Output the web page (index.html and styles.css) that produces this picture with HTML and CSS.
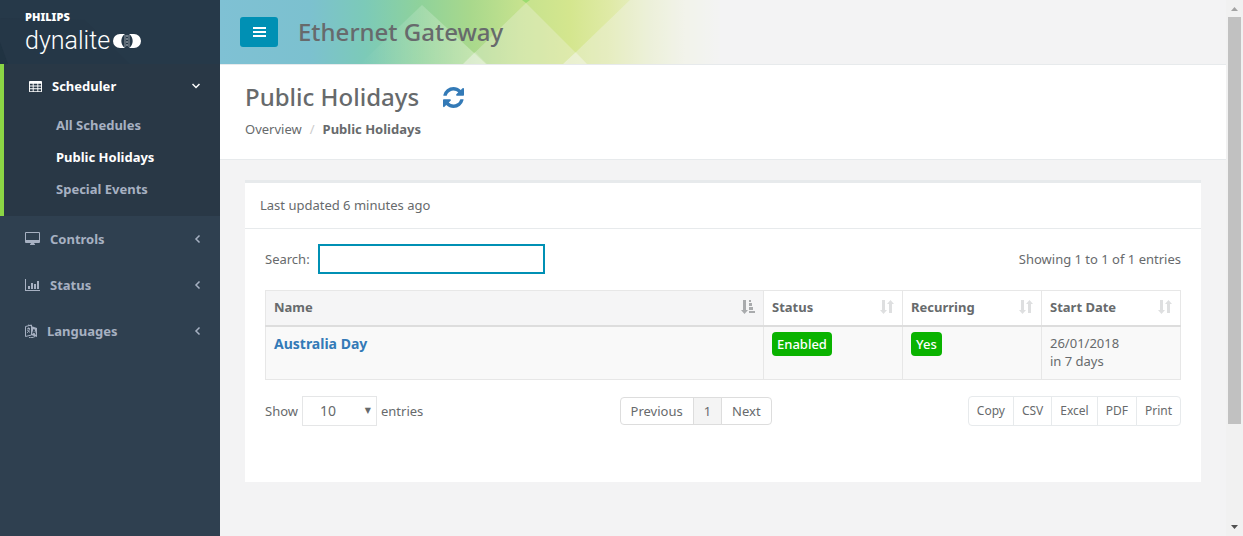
FILE: index.html
```html
<!DOCTYPE html>
<html lang="en">
<head>
    <meta charset="UTF-8">
    <meta name="viewport" content="width=device-width, initial-scale=1.0">
    <title>Ethernet Gateway - Public Holidays</title>
    <link rel="stylesheet" href="styles.css">
</head>
<body>
    <nav class="sidebar">
        <div class="brand">
            <svg class="brand-pattern" viewBox="0 0 220 64" preserveAspectRatio="none" aria-hidden="true">
                <path d="M0 0H220V64H130L85 20 0 18z" fill="#283b4b" opacity=".5"/>
                <path d="M0 42l8 22H0z" fill="#203342"/>
            </svg>
            <span class="brand-name">PHILIPS</span>
            <span class="brand-product">dynalite
                <svg class="brand-mark" viewBox="0 0 28 14" aria-hidden="true">
                    <path d="M7 0h5a8.500 8.500 0 0 0 0 14H7A7 7 0 0 1 7 0zM21 0h-5a8.500 8.500 0 0 1 0 14h5A7 7 0 0 0 21 0z" fill="#fff"/>
                    <path d="M12 1v12M16 1v12" fill="none" stroke="#fff" stroke-opacity=".5"/>
                    <path d="M14 1v12" stroke="#fff" stroke-dasharray="2 1" stroke-opacity=".7"/>
                </svg>
            </span>
        </div>
        <ul class="menu">
            <li class="menu-group active">
                <a class="menu-link" href="#">
                    <svg class="icon icon-small" viewBox="0 0 14 14" aria-hidden="true"><path fill="currentColor" fill-rule="evenodd" d="M1 1h12a1 1 0 0 1 1 1v10a1 1 0 0 1-1 1H1a1 1 0 0 1-1-1V2a1 1 0 0 1 1-1zM1 4v2h3V4zm4 0v2h4V4zm5 0v2h3V4zM1 7v2h3V7zm4 0v2h4V7zm5 0v2h3V7zM1 10v2h3v-2zm4 0v2h4v-2zm5 0v2h3v-2z"/></svg>
                    <span class="menu-label">Scheduler</span>
                    <svg class="arrow" viewBox="0 0 8 8" aria-hidden="true"><path d="M0.500 2L4 5.500 7.500 2"/></svg>
                </a>
                <ul class="submenu">
                    <li><a href="#">All Schedules</a></li>
                    <li><a class="current" href="#">Public Holidays</a></li>
                    <li><a href="#">Special Events</a></li>
                </ul>
            </li>
            <li class="menu-group">
                <a class="menu-link" href="#">
                    <svg class="icon" viewBox="0 0 15 14" aria-hidden="true"><path fill="currentColor" fill-rule="evenodd" d="M1 0h13a1 1 0 0 1 1 1v9a1 1 0 0 1-1 1H9l1 1.500v.5H5v-.5L6 11H1a1 1 0 0 1-1-1V1a1 1 0 0 1 1-1zm0 1v7h13V1z"/></svg>
                    <span class="menu-label">Controls</span>
                    <svg class="arrow" viewBox="0 0 8 8" aria-hidden="true"><path d="M5.500 0.500L2 4l3.500 3.500"/></svg>
                </a>
            </li>
            <li class="menu-group">
                <a class="menu-link" href="#">
                    <svg class="icon" viewBox="0 0 15 14" aria-hidden="true"><path fill="currentColor" d="M0 1h1v11h14v1H0zM3 8h2v3H3zM6 5h2v6H6zM9 6h2v5H9zM12 3h2v8h-2z"/></svg>
                    <span class="menu-label">Status</span>
                    <svg class="arrow" viewBox="0 0 8 8" aria-hidden="true"><path d="M5.500 0.500L2 4l3.500 3.500"/></svg>
                </a>
            </li>
            <li class="menu-group">
                <a class="menu-link" href="#">
                    <svg class="icon icon-narrow" viewBox="0 0 12 14" aria-hidden="true">
                        <path fill="none" stroke="currentColor" d="M.5 2.500l6-1.500v10l-6 1.500zM2 5l3-.7M3.500 3.500v1.500M4.500 5c-.5 2-1.500 3-2.500 4M2.500 6c.6 1.200 1.500 2 2.500 2.300M3 1l4 1M4 13.500c2 .4 4 .1 6-1"/>
                        <path fill="currentColor" fill-rule="evenodd" d="M6 2l6 2v9l-6-2zM8.500 5L7 9.500l1 .3.3-1 1.500.4.4 1.200 1 .3L9.700 5.400zm.6 1.500l.5 1.500-1-.3z"/>
                    </svg>
                    <span class="menu-label">Languages</span>
                    <svg class="arrow" viewBox="0 0 8 8" aria-hidden="true"><path d="M5.500 0.500L2 4l3.500 3.500"/></svg>
                </a>
            </li>
        </ul>
    </nav>

    <main class="page">
        <header class="topbar">
            <svg class="topbar-art" viewBox="0 0 500 64" aria-hidden="true">
                <defs>
                    <linearGradient id="spectrum">
                        <stop offset="0" stop-color="#7fc1d4"/>
                        <stop offset=".18" stop-color="#7cc1cf"/>
                        <stop offset=".29" stop-color="#7ccab8"/>
                        <stop offset=".4" stop-color="#8fd29b"/>
                        <stop offset=".5" stop-color="#a8d88c"/>
                        <stop offset=".6" stop-color="#c5e28e"/>
                        <stop offset=".7" stop-color="#d4e68e"/>
                        <stop offset=".78" stop-color="#dfeaa6"/>
                        <stop offset=".86" stop-color="#e9efcc"/>
                        <stop offset=".93" stop-color="#f1f3e6"/>
                        <stop offset="1" stop-color="#f3f3f3"/>
                    </linearGradient>
                    <linearGradient id="fade">
                        <stop offset="0" stop-color="#fff" stop-opacity="0"/>
                        <stop offset="1" stop-color="#fff" stop-opacity=".35"/>
                    </linearGradient>
                </defs>
                <path d="M0 0h500v64H0z" fill="url(#spectrum)"/>
                <path d="M202 5l64 59H140z" fill="url(#fade)"/>
                <path d="M306 3l61 61H243z" fill="#f3f3e8" opacity=".32"/>
                <path d="M410 0h90v64H343l13-12z" fill="#f3f3f3" opacity=".35"/>
                <path d="M255 52l12 12h-24zM356 52l11 12h-24z" fill="#fff" opacity=".2"/>
                <path d="M302 0h8l-4 3z" fill="#9bdc70"/>
            </svg>
            <button class="menu-toggle" type="button" aria-label="Toggle menu">
                <svg viewBox="0 0 13 10" aria-hidden="true"><path fill="#fff" d="M0 0h13v2H0zM0 4h13v2H0zM0 8h13v2H0z"/></svg>
            </button>
            <h1>Ethernet Gateway</h1>
        </header>

        <section class="page-heading">
            <div class="title-row">
                <h2>Public Holidays</h2>
                <a class="refresh" href="#" aria-label="Refresh">
                    <svg viewBox="128 128 1536 1536" aria-hidden="true"><path fill="currentColor" d="M1639 1056q0 5-1 7-64 268-268 434.500t-478 166.500q-146 0-282.500-55t-243.500-157l-129 129q-19 19-45 19t-45-19-19-45v-448q0-26 19-45t45-19h448q26 0 45 19t19 45-19 45l-137 137q71 66 161 102t187 36q134 0 250-65t186-179q11-17 53-117 8-23 30-23h192q13 0 22.500 9.500t9.500 22.500zm25-800v448q0 26-19 45t-45 19h-448q-26 0-45-19t-19-45 19-45l138-138q-148-137-349-137-134 0-250 65t-186 179q-11 17-53 117-8 23-30 23h-199q-13 0-22.500-9.500t-9.500-22.500v-7q65-268 270-434.500t480-166.500q146 0 284 55.500t245 156.500l130-129q19-19 45-19t45 19 19 45z"/></svg>
                </a>
            </div>
            <ol class="breadcrumb">
                <li><a href="#">Overview</a></li>
                <li><strong>Public Holidays</strong></li>
            </ol>
        </section>

        <section class="card">
            <div class="card-title">Last updated 6 minutes ago</div>
            <div class="card-body">
                <div class="table-top">
                    <div class="search">
                        <label for="search">Search:</label>
                        <input id="search" type="search">
                    </div>
                    <span>Showing 1 to 1 of 1 entries</span>
                </div>
                <table>
                    <thead>
                        <tr>
                            <th class="sorted" scope="col"><div class="th-inner">Name
                                <svg class="sort" viewBox="0 0 14 14" aria-hidden="true"><path fill="#a9abad" d="M2 0h3v10h2l-3.500 4L0 10h2zM8 0h2v2H8zM8 3h3v3H8zM8 7h4v3H8zM8 11h6v2H8z"/></svg>
                            </div></th>
                            <th class="narrow" scope="col"><div class="th-inner">Status
                                <svg class="sort" viewBox="0 0 14 14" aria-hidden="true"><path fill="#dedfe0" d="M2 0h3v10h2l-3.500 4L0 10h2zM9 13V4H7l3.500-4L14 4h-2v9z"/></svg>
                            </div></th>
                            <th class="narrow" scope="col"><div class="th-inner">Recurring
                                <svg class="sort" viewBox="0 0 14 14" aria-hidden="true"><path fill="#dedfe0" d="M2 0h3v10h2l-3.500 4L0 10h2zM9 13V4H7l3.500-4L14 4h-2v9z"/></svg>
                            </div></th>
                            <th class="narrow" scope="col"><div class="th-inner">Start Date
                                <svg class="sort" viewBox="0 0 14 14" aria-hidden="true"><path fill="#dedfe0" d="M2 0h3v10h2l-3.500 4L0 10h2zM9 13V4H7l3.500-4L14 4h-2v9z"/></svg>
                            </div></th>
                        </tr>
                    </thead>
                    <tbody>
                        <tr>
                            <td><a class="event-name" href="#">Australia Day</a></td>
                            <td class="badge-cell"><span class="badge">Enabled</span></td>
                            <td class="badge-cell"><span class="badge">Yes</span></td>
                            <td>26/01/2018<br>in 7 days</td>
                        </tr>
                    </tbody>
                </table>
                <div class="table-bottom">
                    <div class="page-length">
                        <label for="length">Show</label>
                        <span class="select-wrap">
                            <select id="length">
                                <option>10</option>
                            </select>
                        </span>
                        <span>entries</span>
                    </div>
                    <div class="button-group pagination">
                        <button type="button">Previous</button>
                        <button class="current" type="button">1</button>
                        <button type="button">Next</button>
                    </div>
                    <div class="button-group export">
                        <button type="button">Copy</button>
                        <button type="button">CSV</button>
                        <button type="button">Excel</button>
                        <button type="button">PDF</button>
                        <button type="button">Print</button>
                    </div>
                </div>
            </div>
        </section>
    </main>

    <div class="scrollbar" aria-hidden="true">
        <svg class="scroll-arrow" viewBox="0 0 17 17"><path d="M5 11l3.500-4 3.500 4z" fill="#a3a3a3"/></svg>
        <div class="scroll-track"><div class="scroll-thumb"></div></div>
        <svg class="scroll-arrow" viewBox="0 0 17 17"><path d="M5 6h7l-3.500 4z" fill="#505050"/></svg>
    </div>
</body>
</html>
```
FILE: styles.css
```css
* {
    box-sizing: border-box;
    margin: 0;
    padding: 0;
}

body {
    display: flex;
    height: 100vh;
    overflow: hidden;
    background-color: #f3f3f4;
    color: #676a6c;
    font-family: 'Noto Sans', 'Open Sans', sans-serif;
    font-size: 13px;
    line-height: 18px;
}

a {
    color: inherit;
    text-decoration: none;
}

ul, ol {
    list-style: none;
}

svg {
    display: block;
    flex: none;
}

button, input, select {
    font: inherit;
    color: inherit;
}

/* Sidebar */
.sidebar {
    flex: none;
    width: 220px;
    background-color: #2f4050;
    color: #a7b1c2;
    font-weight: 700;
}

.brand {
    position: relative;
    height: 64px;
    padding: 10px 25px;
    background-color: #253747;
    color: white;
}

.brand-pattern {
    position: absolute;
    inset: 0;
    width: 100%;
    height: 100%;
}

.brand-name {
    position: relative;
    display: block;
    font-size: 11px;
    font-weight: 900;
    line-height: 14px;
}

.brand-product {
    position: relative;
    display: flex;
    align-items: center;
    gap: 3px;
    margin-top: 1px;
    font-family: Roboto, sans-serif;
    font-size: 25px;
    font-weight: 300;
    line-height: 32px;
}

.brand-mark {
    width: 28px;
    height: 14px;
}

.menu-group.active {
    border-left: 4px solid #8bd645;
    background-color: #293846;
    color: #a7b1c2;
}

.menu-link {
    display: flex;
    align-items: center;
    gap: 10px;
    padding: 14px 18px 14px 25px;
}

.active .menu-link {
    padding: 13px 20px 14px 25px;
    color: white;
}

.icon {
    width: 15px;
    height: 14px;
}

.icon-small {
    width: 13px;
    height: 13px;
}

.icon-narrow {
    width: 12px;
}

.menu-label {
    flex: 1;
}

.arrow {
    width: 8px;
    height: 8px;
    fill: none;
    stroke: currentColor;
    stroke-width: 1.5;
}

.submenu {
    padding-bottom: 11px;
}

.submenu a {
    display: block;
    padding: 7px 10px 7px 52px;
}

.submenu .current {
    color: white;
}

/* Top bar */
.page {
    flex: 1;
    min-width: 0;
}

.topbar {
    position: relative;
    display: flex;
    align-items: center;
    gap: 20px;
    height: 65px;
    padding: 0 20px;
    border-bottom: 1px solid #e7eaec;
    overflow: hidden;
}

.topbar-art {
    position: absolute;
    top: 0;
    left: 0;
    width: 500px;
    height: 64px;
}

.menu-toggle {
    position: relative;
    display: flex;
    align-items: center;
    justify-content: center;
    width: 38px;
    height: 30px;
    border: none;
    border-radius: 3px;
    background-color: #0090b4;
}

.menu-toggle svg {
    width: 13px;
    height: 10px;
}

h1, h2 {
    position: relative;
    font-size: 24px;
    font-weight: 500;
    line-height: 32px;
}

/* Page heading */
.page-heading {
    padding: 16px 25px 21px;
    border-bottom: 1px solid #e7eaec;
    background-color: white;
}

.title-row {
    display: flex;
    align-items: center;
    gap: 24px;
}

.refresh {
    color: #337ab7;
}

.refresh svg {
    width: 21px;
    height: 21px;
}

.breadcrumb {
    display: flex;
    margin-top: 7px;
}

.breadcrumb li + li::before {
    content: "/";
    padding: 0 8px;
    color: #ccc;
}

strong {
    font-weight: 700;
}

/* Holidays table */
.card {
    margin: 20px 25px;
    border-top: 3px solid #e7eaec;
    background-color: white;
}

.card-title {
    padding: 13px 15px 14px;
    border-bottom: 1px solid #e7eaec;
}

.card-body {
    padding: 15px 20px 56px;
}

.table-top {
    display: flex;
    align-items: center;
    justify-content: space-between;
    margin-bottom: 16px;
}

.search {
    display: flex;
    align-items: center;
    gap: 8px;
}

.search input {
    width: 227px;
    height: 30px;
    padding: 0 8px;
    border: 2px solid #0090b4;
    outline: none;
}

table {
    width: 100%;
    table-layout: fixed;
    border-collapse: collapse;
}

th, td {
    border: 1px solid #e7e7e7;
    padding: 7px 8px 8px;
    text-align: left;
    vertical-align: top;
}

th {
    padding-bottom: 9px;
    border-bottom: 2px solid #ddd;
    font-weight: 700;
}

.sorted {
    background-color: #f5f5f6;
}

.narrow {
    width: 139px;
}

.th-inner {
    display: flex;
    align-items: center;
    justify-content: space-between;
}

.sort {
    width: 14px;
    height: 14px;
}

tbody tr {
    background-color: #f9f9f9;
}

td {
    height: 53px;
}

.event-name {
    color: #337ab7;
    font-size: 14px;
    font-weight: 700;
    line-height: 20px;
}

.badge-cell {
    padding-top: 5px;
}

.badge {
    display: inline-block;
    padding: 3px 5px;
    border-radius: 4px;
    background-color: #0ab300;
    color: white;
    font-weight: 500;
}

.table-bottom {
    display: flex;
    align-items: center;
    justify-content: space-between;
    margin-top: 16px;
}

.page-length {
    display: flex;
    align-items: center;
    gap: 4px;
}

.select-wrap {
    position: relative;
}

.select-wrap::after {
    content: "▼";
    position: absolute;
    top: 6px;
    right: 6px;
    font-family: 'DejaVu Sans', sans-serif;
    font-size: 8px;
    pointer-events: none;
}

select {
    display: block;
    appearance: none;
    width: 75px;
    height: 30px;
    padding-left: 17px;
    border: 1px solid #e5e6e7;
    background-color: white;
    font-size: 14px;
}

.button-group {
    display: flex;
}

.button-group button {
    margin-left: -1px;
    border: 1px solid #ddd;
    background-color: white;
}

.button-group button:first-child {
    margin-left: 0;
    border-radius: 4px 0 0 4px;
}

.button-group button:last-child {
    border-radius: 0 4px 4px 0;
}

.pagination button {
    padding: 4px 10px;
}

.pagination .current {
    background-color: #f4f4f4;
}

.export button {
    padding: 5px 8px;
    border-color: #e7eaec;
    font-size: 12px;
}

/* Page scrollbar */
.scrollbar {
    display: flex;
    flex: none;
    flex-direction: column;
    width: 17px;
    background-color: #f1f1f1;
}

.scroll-arrow {
    width: 17px;
    height: 17px;
}

.scroll-track {
    flex: 1;
    padding: 0 2px;
}

.scroll-thumb {
    height: 81%;
    background-color: #c1c1c1;
}
```
